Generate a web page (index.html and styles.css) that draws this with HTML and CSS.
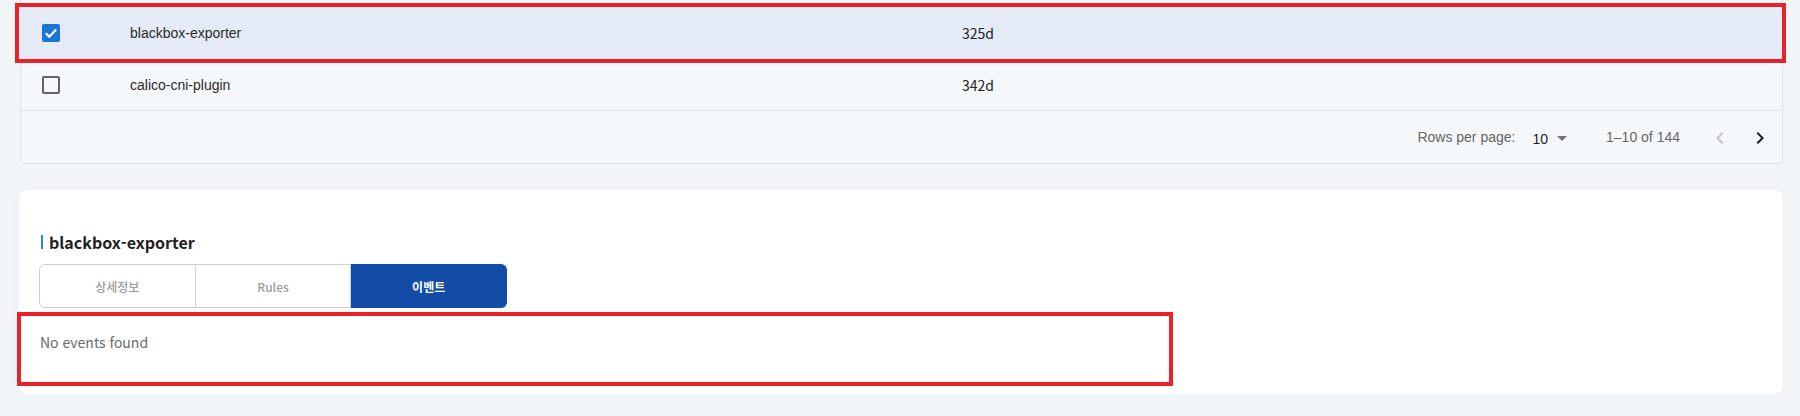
FILE: index.html
```html
<!DOCTYPE html>
<html lang="ko">
<head>
<meta charset="utf-8">
<title>blackbox-exporter</title>
<link rel="stylesheet" href="styles.css">
</head>
<body>
<div class="page">
  <section class="table-card">
    <div class="row selected">
      <div class="cell check">
        <span class="checkbox checked">
          <svg viewBox="0 0 18 18" width="18" height="18"><polyline points="3.8,9.2 7.3,12.7 14.2,5.6" fill="none" stroke="#fff" stroke-width="2.2"/></svg>
        </span>
      </div>
      <div class="cell name">blackbox-exporter</div>
      <div class="cell age">325d</div>
    </div>
    <div class="row">
      <div class="cell check"><span class="checkbox"></span></div>
      <div class="cell name">calico-cni-plugin</div>
      <div class="cell age">342d</div>
    </div>
    <div class="pager">
      <span class="pager-label">Rows per page:</span>
      <span class="pager-select">10
        <svg viewBox="0 0 24 24" width="24" height="24"><path d="M7 10l5 5 5-5z" fill="#757575"/></svg>
      </span>
      <span class="pager-range">1–10 of 144</span>
      <span class="pager-actions">
        <svg viewBox="0 0 24 24" width="24" height="24"><path d="M15.41 16.59 10.83 12l4.58-4.59L14 6l-6 6 6 6 1.41-1.41z" fill="#c4c4c4"/></svg>
        <svg viewBox="0 0 24 24" width="24" height="24"><path d="M8.59 16.59 13.17 12 8.59 7.41 10 6l6 6-6 6-1.41-1.41z" fill="#1f1f1f"/></svg>
      </span>
    </div>
  </section>

  <section class="detail-card">
    <h2 class="detail-title">blackbox-exporter</h2>
    <div class="tabs">
      <div class="tab">상세정보</div>
      <div class="tab">Rules</div>
      <div class="tab active">이벤트</div>
    </div>
    <div class="events">No events found</div>
  </section>
</div>
</body>
</html>
```

FILE: styles.css
```css
* { box-sizing: border-box; }

body {
  margin: 0;
  background: #f2f5f8;
  font-family: "Liberation Sans", Arial, sans-serif;
  color: #333;
}

.page {
  padding: 0 17px 0 20px;
}

/* ---------- table card ---------- */
.table-card {
  background: #f5f8fb;
  border: 1px solid #dfe3e8;
  border-top: 0;
  border-radius: 0 0 4px 4px;
  padding-top: 7px;
}

.row {
  display: flex;
  align-items: center;
  height: 52px;
  border-bottom: 1px solid #e0e3e7;
  font-size: 14px;
}

.row.selected {
  background: #e4ebf6;
  border-bottom: 0;
  margin-left: -2px;
  padding-left: 2px;
  outline: 4px solid #e8212a;
}

.cell.check {
  width: 109px;
  padding-left: 21px;
  display: flex;
  align-items: center;
}

.checkbox {
  width: 18px;
  height: 18px;
  border: 2px solid #636363;
  border-radius: 2px;
  display: block;
}

.checkbox.checked {
  border: 0;
  background: #1976d2;
}

.checkbox svg { display: block; }

.cell.name {
  width: 832px;
  color: #2b2b2b;
}

.cell.age {
  font-family: "Noto Sans CJK KR", "Noto Sans", sans-serif;
  color: #222;
}

.pager {
  height: 52px;
  display: flex;
  align-items: center;
  justify-content: flex-end;
  padding-right: 10px;
  font-size: 14px;
  color: #666;
}

.pager-select {
  margin-left: 17px;
  color: #1f1f1f;
  display: flex;
  align-items: center;
  gap: 2px;
  padding-top: 3px;
}

.pager-select svg { display: block; margin-top: -1px; }

.pager-range {
  margin-left: 32px;
}

.pager-actions {
  margin-left: 28px;
  display: flex;
  gap: 16px;
  padding-top: 2px;
}

.pager-actions svg { display: block; }

/* ---------- detail card ---------- */
.detail-card {
  margin: 26px 0 0 -1px;
  background: #fff;
  border-radius: 8px;
  box-shadow: 0 2px 6px rgba(40, 60, 90, 0.05);
  padding: 40px 0 12px 2px;
}

.detail-title {
  margin: 0 0 10px 0;
  padding-left: 20px;
  height: 24px;
  display: flex;
  align-items: center;
  font-family: "Noto Sans CJK KR", "Noto Sans", sans-serif;
  font-size: 16px;
  font-weight: 700;
  color: #222;
}

.detail-title::before {
  content: "";
  width: 2px;
  height: 14px;
  background: #2f80ed;
  margin-right: 6px;
}

.tabs {
  display: flex;
  margin-left: 18px;
  width: 468px;
  height: 44px;
}

.tab {
  flex: 1;
  display: flex;
  align-items: center;
  justify-content: center;
  border: 1px solid #cfcfcf;
  border-left: 0;
  font-family: "Noto Sans CJK KR", "Noto Sans", sans-serif;
  font-size: 12px;
  font-weight: 500;
  color: #9c9c9c;
}

.tab:first-child {
  border-left: 1px solid #cfcfcf;
  border-radius: 6px 0 0 6px;
}

.tab:last-child {
  border-radius: 0 6px 6px 0;
}

.tab.active {
  background: #124ca6;
  border-color: #124ca6;
  color: #fff;
  font-weight: 700;
}

.events {
  margin-top: 8px;
  width: 1148px;
  height: 66px;
  padding: 16px 0 0 19px;
  outline: 4px solid #e8212a;
  font-family: "Noto Sans CJK KR", "Noto Sans", sans-serif;
  font-size: 14px;
  line-height: 20px;
  color: #6b6b6b;
}
```
